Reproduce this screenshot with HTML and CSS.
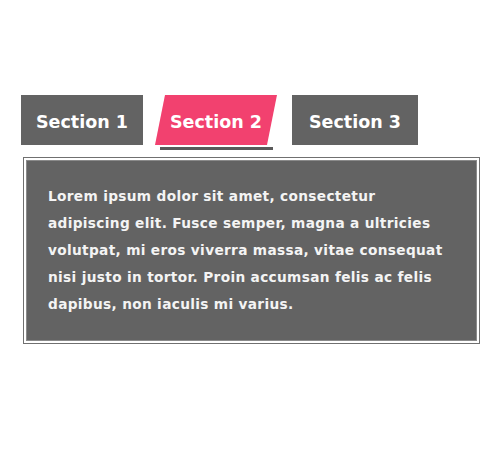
FILE: index.html
```html
<!DOCTYPE html>
<html lang="en">
<head>
    <meta charset="UTF-8">
    <meta name="viewport" content="width=device-width, initial-scale=1.0">
    <title>Tabs</title>
    <link rel="stylesheet" href="styles.css">
</head>
<body>
    <div class="tabs">
        <div class="tab tab-1">Section 1</div>
        <div class="tab tab-2 active"><span>Section 2</span></div>
        <div class="tab tab-3">Section 3</div>
    </div>
    <div class="panel">
        <div class="panel-body">
            Lorem ipsum dolor sit amet, consectetur adipiscing elit. Fusce semper, magna a ultricies volutpat, mi eros viverra massa, vitae consequat nisi justo in tortor. Proin accumsan felis ac felis dapibus, non iaculis mi varius.
        </div>
    </div>
</body>
</html>
```

FILE: styles.css
```css
body {
    margin: 0;
    background: #fff;
    font-family: "DejaVu Sans", Verdana, sans-serif;
    font-weight: bold;
    color: #fff;
}
.tabs {
    display: flex;
    align-items: flex-start;
    padding: 95px 0 0 21px;
}
.tab {
    height: 50px;
    box-sizing: border-box;
    padding-top: 3px;
    display: flex;
    align-items: center;
    justify-content: center;
    background: #636363;
    font-size: 17.5px;
    position: relative;
}
.tab-1 {
    width: 122px;
}
.tab-2 {
    width: 112px;
    margin-left: 17px;
    background: none;
}
.tab-3 {
    width: 126px;
    margin-left: 20px;
}
/* slanted pink background, text stays upright */
.tab.active::before {
    content: "";
    position: absolute;
    inset: 0;
    background: #f2416f;
    transform: skewX(-11.3deg);
}
.tab.active span {
    position: relative;
}
.tab.active::after {
    content: "";
    position: absolute;
    left: 0;
    right: -1px;
    bottom: -5px;
    height: 3px;
    background: #5a5a5a;
}
.panel {
    margin: 12px 0 0 23px;
    width: 457px;
    box-sizing: border-box;
    border: 1px solid #707070;
    padding: 2px;
}
.panel-body {
    background: #636363;
    border: 1px solid #8a8a8a;
    padding: 22px 22px 22px 21px;
    font-size: 13.7px;
    letter-spacing: 0.33px;
    line-height: 27px;
    color: #f4f4f4;
}
```
